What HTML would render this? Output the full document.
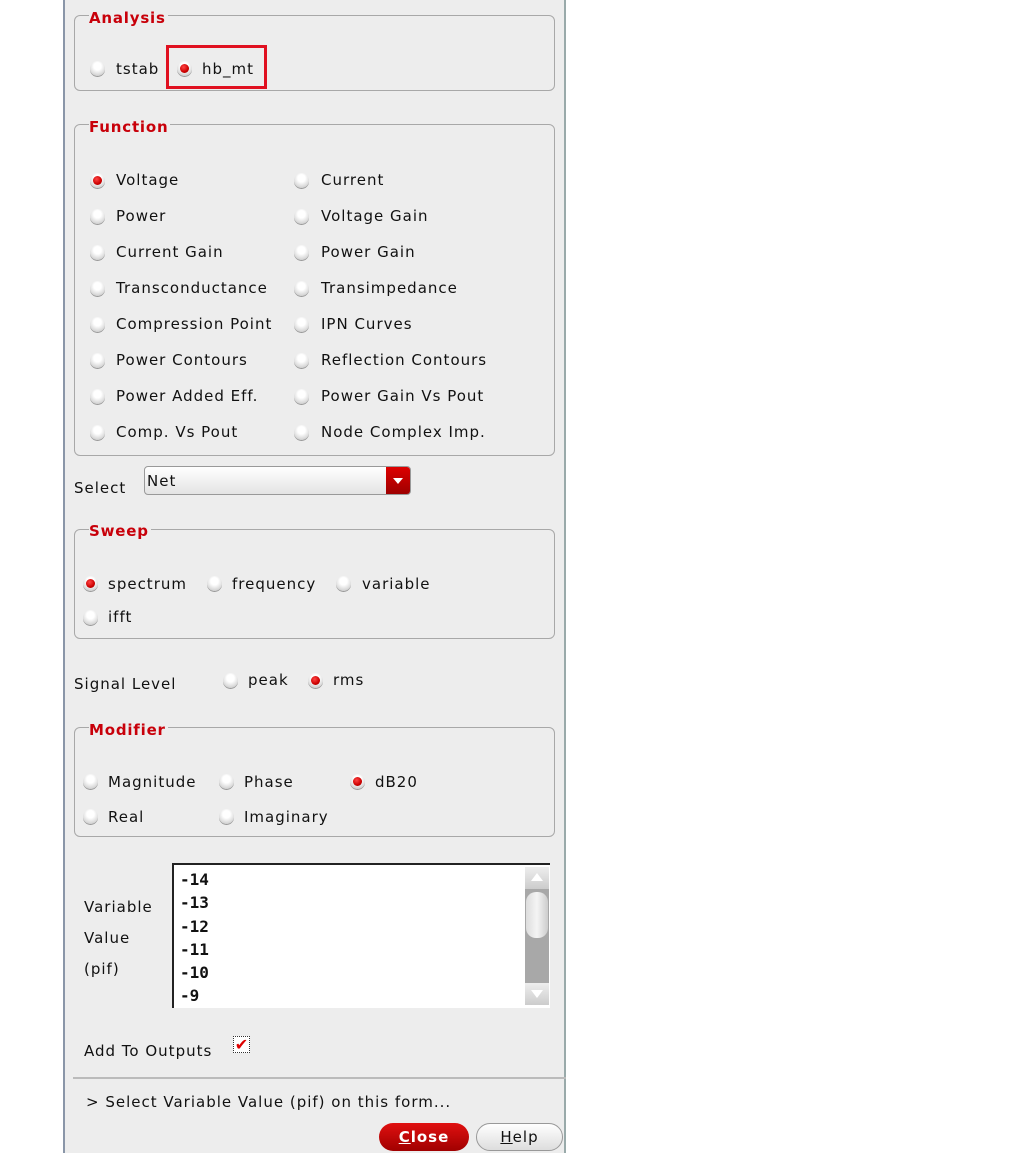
<!DOCTYPE html>
<html><head><meta charset="utf-8"><style>
body{margin:0;width:1013px;height:1153px;background:#fff;position:relative;overflow:hidden;font-family:"DejaVu Sans","Liberation Sans",sans-serif;}
#p{position:absolute;left:63px;top:0;width:503px;height:1153px;background:#ededed;border-left:2px solid #8a96a8;border-right:2px solid #9aa;box-sizing:border-box;}
.t{position:absolute;font-size:15px;line-height:18px;letter-spacing:1.0px;color:#111;white-space:nowrap;}
.g{position:absolute;left:74px;width:481px;border:1px solid #a8a8a8;border-radius:6px;box-sizing:border-box;}
.lg{position:absolute;left:89px;font-size:15px;line-height:18px;font-weight:bold;color:#c8000a;background:#ededed;padding:0 2px 0 0;letter-spacing:0.8px;}
.r{position:absolute;width:15px;height:15px;border-radius:50%;background:radial-gradient(circle at 50% 35%,#fff 30%,#d8d8d8 70%,#aaa 100%);box-shadow:0 1px 0 #999;}
.r.on::after{content:"";position:absolute;left:3px;top:3px;width:9px;height:9px;border-radius:50%;background:radial-gradient(circle at 40% 35%,#f44,#c00 60%,#800);}
.li{position:absolute;left:180px;font-family:"DejaVu Sans Mono","Liberation Mono",monospace;font-size:16px;font-weight:bold;line-height:18px;color:#111;}
</style></head><body>
<div id="p"></div>

<div class="g" style="top:15px;height:76px"></div>
<div class="lg" style="top:9px">Analysis</div>
<div class="r" style="left:90px;top:61px"></div><div class="t" style="left:116px;top:60px">tstab</div>
<div class="r on" style="left:177px;top:61px"></div><div class="t" style="left:202px;top:60px">hb_mt</div>
<div style="position:absolute;left:166px;top:45px;width:101px;height:44px;border:3px solid #e01020;box-sizing:border-box"></div>

<div class="g" style="top:124px;height:332px"></div>
<div class="lg" style="top:118px">Function</div>
<div class="r on" style="left:90px;top:173px"></div><div class="t" style="left:116px;top:171px">Voltage</div>
<div class="r" style="left:294px;top:173px"></div><div class="t" style="left:321px;top:171px">Current</div>
<div class="r" style="left:90px;top:209px"></div><div class="t" style="left:116px;top:207px">Power</div>
<div class="r" style="left:294px;top:209px"></div><div class="t" style="left:321px;top:207px">Voltage Gain</div>
<div class="r" style="left:90px;top:245px"></div><div class="t" style="left:116px;top:243px">Current Gain</div>
<div class="r" style="left:294px;top:245px"></div><div class="t" style="left:321px;top:243px">Power Gain</div>
<div class="r" style="left:90px;top:281px"></div><div class="t" style="left:116px;top:279px">Transconductance</div>
<div class="r" style="left:294px;top:281px"></div><div class="t" style="left:321px;top:279px">Transimpedance</div>
<div class="r" style="left:90px;top:317px"></div><div class="t" style="left:116px;top:315px">Compression Point</div>
<div class="r" style="left:294px;top:317px"></div><div class="t" style="left:321px;top:315px">IPN Curves</div>
<div class="r" style="left:90px;top:353px"></div><div class="t" style="left:116px;top:351px">Power Contours</div>
<div class="r" style="left:294px;top:353px"></div><div class="t" style="left:321px;top:351px">Reflection Contours</div>
<div class="r" style="left:90px;top:389px"></div><div class="t" style="left:116px;top:387px">Power Added Eff.</div>
<div class="r" style="left:294px;top:389px"></div><div class="t" style="left:321px;top:387px">Power Gain Vs Pout</div>
<div class="r" style="left:90px;top:425px"></div><div class="t" style="left:116px;top:423px">Comp. Vs Pout</div>
<div class="r" style="left:294px;top:425px"></div><div class="t" style="left:321px;top:423px">Node Complex Imp.</div>

<div class="t" style="left:74px;top:479px">Select</div>
<div style="position:absolute;left:144px;top:466px;width:267px;height:29px;border:1px solid #999;border-radius:4px;box-sizing:border-box;background:linear-gradient(#fff,#e4e4e4);overflow:hidden">
<div class="t" style="left:2px;top:5px">Net</div>
<div style="position:absolute;right:0;top:0;width:24px;height:29px;background:linear-gradient(#d00,#900)"><div style="position:absolute;left:7px;top:11px;border-left:5px solid transparent;border-right:5px solid transparent;border-top:6px solid #fff"></div></div>
</div>

<div class="g" style="top:529px;height:110px"></div>
<div class="lg" style="top:522px">Sweep</div>
<div class="r on" style="left:83px;top:576px"></div><div class="t" style="left:108px;top:575px">spectrum</div>
<div class="r" style="left:207px;top:576px"></div><div class="t" style="left:232px;top:575px">frequency</div>
<div class="r" style="left:336px;top:576px"></div><div class="t" style="left:362px;top:575px">variable</div>
<div class="r" style="left:83px;top:610px"></div><div class="t" style="left:108px;top:608px">ifft</div>

<div class="t" style="left:74px;top:675px">Signal Level</div>
<div class="r" style="left:223px;top:673px"></div><div class="t" style="left:248px;top:671px">peak</div>
<div class="r on" style="left:308px;top:673px"></div><div class="t" style="left:333px;top:671px">rms</div>

<div class="g" style="top:727px;height:110px"></div>
<div class="lg" style="top:721px">Modifier</div>
<div class="r" style="left:83px;top:774px"></div><div class="t" style="left:108px;top:773px">Magnitude</div>
<div class="r" style="left:219px;top:774px"></div><div class="t" style="left:244px;top:773px">Phase</div>
<div class="r on" style="left:350px;top:774px"></div><div class="t" style="left:375px;top:773px">dB20</div>
<div class="r" style="left:83px;top:809px"></div><div class="t" style="left:108px;top:808px">Real</div>
<div class="r" style="left:219px;top:809px"></div><div class="t" style="left:244px;top:808px">Imaginary</div>

<div class="t" style="left:84px;top:898px">Variable</div>
<div class="t" style="left:84px;top:929px">Value</div>
<div class="t" style="left:84px;top:960px">(pif)</div>
<div style="position:absolute;left:172px;top:863px;width:378px;height:145px;background:#fff;border-top:2px solid #222;border-left:2px solid #222;box-sizing:border-box"></div>
<div class="li" style="top:871px">-14</div>
<div class="li" style="top:894px">-13</div>
<div class="li" style="top:918px">-12</div>
<div class="li" style="top:941px">-11</div>
<div class="li" style="top:964px">-10</div>
<div class="li" style="top:987px">-9</div>
<div style="position:absolute;left:525px;top:867px;width:24px;height:138px;background:#a8a8a8"></div>
<div style="position:absolute;left:525px;top:867px;width:24px;height:22px;background:linear-gradient(#eee,#ccc)"><div style="position:absolute;left:6px;top:6px;border-left:6px solid transparent;border-right:6px solid transparent;border-bottom:8px solid #fff"></div></div>
<div style="position:absolute;left:526px;top:892px;width:22px;height:46px;border-radius:10px;background:linear-gradient(90deg,#ddd,#f4f4f4,#ccc)"></div>
<div style="position:absolute;left:525px;top:983px;width:24px;height:22px;background:linear-gradient(#eee,#ccc)"><div style="position:absolute;left:6px;top:7px;border-left:6px solid transparent;border-right:6px solid transparent;border-top:8px solid #fff"></div></div>

<div class="t" style="left:84px;top:1042px">Add To Outputs</div>
<div style="position:absolute;left:233px;top:1036px;width:17px;height:17px;border:1px dotted #333;background:#fff;box-sizing:border-box;color:#d00;font-size:16px;line-height:15px;font-weight:bold;text-align:center">✔</div>

<div style="position:absolute;left:73px;top:1077px;width:493px;height:2px;background:#bbb"></div>
<div class="t" style="left:86px;top:1093px">&gt; Select Variable Value (pif) on this form...</div>

<div style="position:absolute;left:379px;top:1123px;width:90px;height:28px;border-radius:14px;background:linear-gradient(#e01010,#a00000);color:#fff;font-weight:bold;font-size:15px;line-height:28px;text-align:center;letter-spacing:1px"><u>C</u>lose</div>
<div style="position:absolute;left:476px;top:1123px;width:87px;height:28px;border-radius:14px;border:1px solid #999;box-sizing:border-box;background:linear-gradient(#fff,#ddd);color:#111;font-size:15px;line-height:26px;text-align:center;letter-spacing:1px"><u>H</u>elp</div>
</body></html>
